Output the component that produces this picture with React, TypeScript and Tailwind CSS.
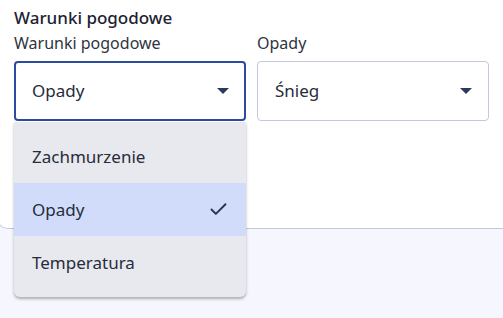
import { Check } from "lucide-react";

function Caret() {
  return (
    <svg width="12" height="6" viewBox="0 0 12 6" className="shrink-0">
      <path d="M0 0 L12 0 L6 6 Z" fill="#2a3a5c" />
    </svg>
  );
}

const options = ["Zachmurzenie", "Opady", "Temperatura"];

export default function App() {
  return (
    <div className="h-[318px] w-[503px] overflow-hidden bg-[#f6f7fe] font-['Noto_Sans',sans-serif]">
      <div className="-ml-[4px] h-[229px] bg-white border-b border-l border-[#c3c8dc] rounded-bl-[12px] pl-[17px] pr-[13px] pt-[6px]">
        <h2 className="text-[17px] font-medium leading-[24px] text-[#1c2333]">Warunki pogodowe</h2>
        <div className="mt-[3px] flex gap-[11px]">
          <div className="relative w-[232px]">
            <label className="block text-[16px] leading-[20px] text-[#2f3440]">Warunki pogodowe</label>
            <div className="mt-[8px] flex h-[60px] items-center justify-between rounded-[4px] border-2 border-[#2c4a9e] pl-[16px] pr-[15px]">
              <span className="text-[17px] text-[#262c3a]">Opady</span>
              <Caret />
            </div>
            <ul className="absolute left-0 top-[89px] z-10 w-[232px] rounded-b-[6px] bg-[#e8e9ee] py-[8px] shadow-[0_2px_3px_rgba(0,0,0,0.3)]">
              {options.map((o) => (
                <li
                  key={o}
                  className={`flex h-[53px] items-center justify-between pl-[18px] pr-[17px] text-[17px] text-[#262c3a] ${
                    o === "Opady" ? "bg-[#d0dcfa]" : ""
                  }`}
                >
                  <span>{o}</span>
                  {o === "Opady" && <Check size={21} strokeWidth={2.2} color="#2a3450" />}
                </li>
              ))}
            </ul>
          </div>
          <div className="w-[232px]">
            <label className="block text-[16px] leading-[20px] text-[#2f3440]">Opady</label>
            <div className="mt-[8px] flex h-[60px] items-center justify-between rounded-[4px] border border-[#c3c8dc] pl-[17px] pr-[16px]">
              <span className="text-[17px] text-[#262c3a]">Śnieg</span>
              <Caret />
            </div>
          </div>
        </div>
      </div>
    </div>
  );
}
